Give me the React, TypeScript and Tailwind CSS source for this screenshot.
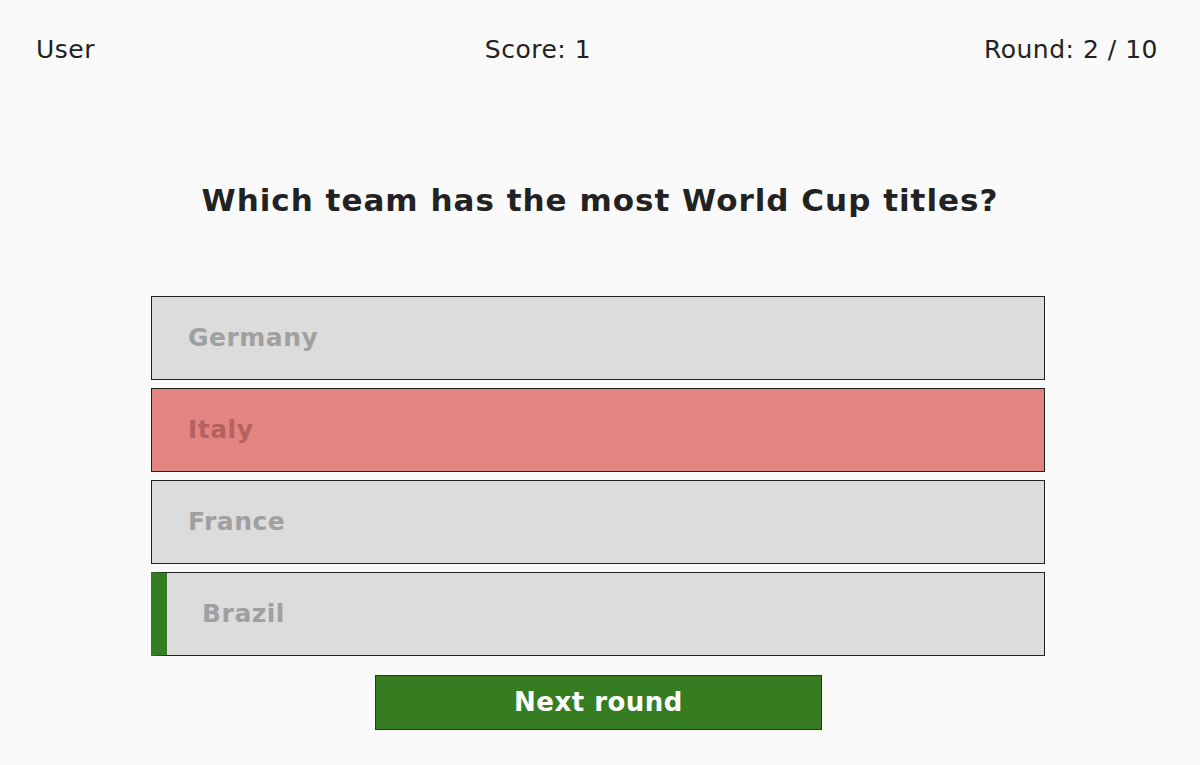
import React from "react";

const options = [
  { name: "Germany", state: "idle" },
  { name: "Italy", state: "wrong" },
  { name: "France", state: "idle" },
  { name: "Brazil", state: "right" },
];

export default function App() {
  return (
    <div
      className="min-h-screen bg-[#fafafa] text-[#222222]"
      style={{ fontFamily: '"DejaVu Sans", "Liberation Sans", sans-serif' }}
    >
      {/* Header */}
      <header className="flex items-center justify-between pl-9 pr-[42px] pt-[35px] text-[25px] leading-[30px] tracking-[0.5px]">
        <span className="w-[74px]">User</span>
        <span className="w-[119px] whitespace-nowrap text-center">Score: 1</span>
        <span className="w-[192px] whitespace-nowrap text-right">Round: 2 / 10</span>
      </header>

      {/* Question */}
      <h1 className="mt-[115px] text-center text-[31px] leading-[40px] font-semibold tracking-[1px]">
        Which team has the most World Cup titles?
      </h1>

      {/* Answers */}
      <div className="ml-[151px] mt-[76px] flex w-[894px] flex-col gap-2">
        {options.map((o) => (
          <button
            key={o.name}
            className={`flex h-[84px] items-center border border-[#222222] text-left text-[25px] font-semibold tracking-[0.5px] ${
              o.state === "wrong" ? "bg-[#e28482] text-[#b5625f]" : "bg-[#dcdcdc] text-[#a0a0a0]"
            } ${o.state === "right" ? "border-l-[16px] border-l-[#357d23] pl-[35px]" : "pl-9"}`}
          >
            {o.name}
          </button>
        ))}
      </div>

      <div className="ml-[375px] mt-[19px]">
        <button className="h-[55px] w-[447px] border border-[#1f3d16] bg-[#367d22] text-[26px] font-semibold text-white tracking-[0.5px]">
          Next round
        </button>
      </div>
    </div>
  );
}
